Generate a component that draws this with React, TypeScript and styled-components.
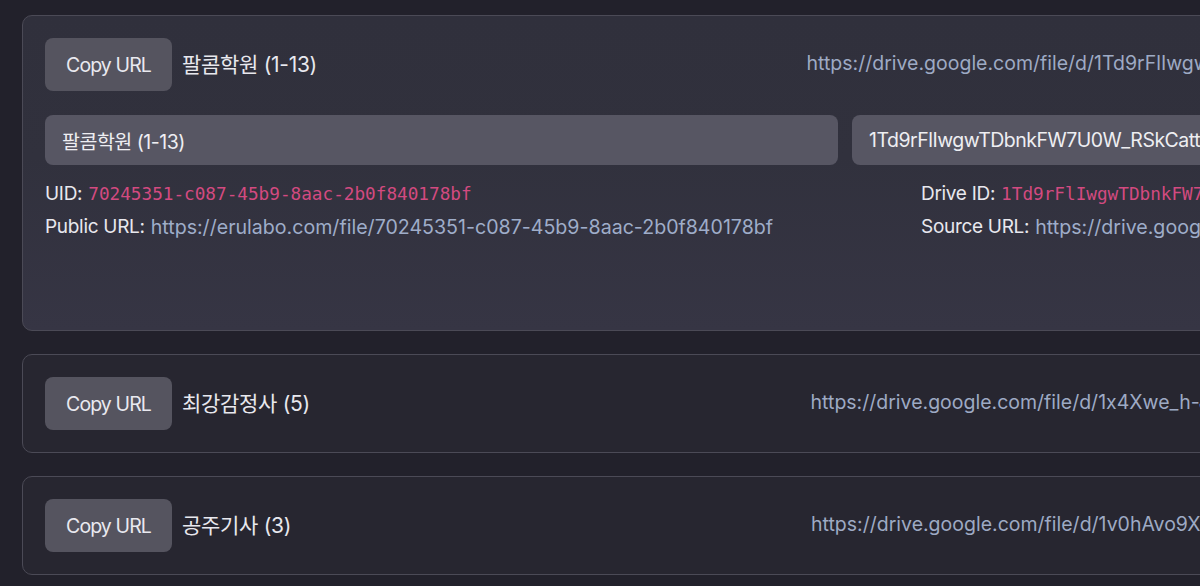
import React from "react";
import styled, { createGlobalStyle } from "styled-components";

const Global = createGlobalStyle`
  html, body { margin: 0; padding: 0; background: #22212b; overflow: hidden; }
  body {
    font-family: "Inter", "Noto Sans CJK KR", sans-serif;
    color: #e8e8ee;
    font-feature-settings: "calt" 0;
  }
  button { font-feature-settings: "calt" 0; }
`;

const Page = styled.div`
  width: 1646px;
  padding: 15px 0 0 22px;
  display: flex;
  flex-direction: column;
  gap: 23px;
`;

const Card = styled.div<{ $open?: boolean }>`
  border: 1px solid #4b4a56;
  border-radius: 10px;
  padding: 22px 22px ${(p) => (p.$open ? "87px" : "22px")};
  background: ${(p) =>
    p.$open
      ? "linear-gradient(180deg, #30303c 0%, #31313d 45%, #363544 100%)"
      : "#272630"};
  display: flex;
  flex-direction: column;
`;

const Header = styled.div`
  display: flex;
  align-items: center;
  height: 53px;
`;

const CopyButton = styled.button`
  height: 53px;
  width: 127px;
  border: none;
  border-radius: 8px;
  background: #55545f;
  color: #e9e9ef;
  font-family: "Inter", sans-serif;
  font-size: 19.5px;
  letter-spacing: -0.9px;
  padding: 0;
  flex-shrink: 0;
`;

const Title = styled.span`
  margin-left: 10px;
  margin-top: -4px;
  font-size: 21px;
  letter-spacing: -0.3px;
  color: #e8e8ee;
`;

const HeaderUrl = styled.span`
  margin-left: auto;
  margin-right: -7px;
  margin-top: -3px;
  font-size: 19.5px;
  color: #9eaac4;
  white-space: nowrap;
`;

const Inputs = styled.div`
  margin-top: 24px;
  display: grid;
  grid-template-columns: 1fr 1fr;
  gap: 14px;
`;

const Field = styled.div`
  height: 50px;
  border-radius: 8px;
  background: #575663;
  display: flex;
  align-items: center;
  padding: 0 17px;
  font-size: 19.5px;
  letter-spacing: -0.5px;
  color: #eeeef2;
  white-space: nowrap;
  overflow: hidden;
`;

const Info = styled.div`
  margin-top: 12px;
  display: grid;
  grid-template-columns: 876px 1fr;
`;

const InfoCol = styled.div`
  display: flex;
  flex-direction: column;
`;

const Line = styled.div`
  height: 33px;
  display: flex;
  align-items: center;
  font-size: 19px;
  letter-spacing: -0.3px;
  white-space: nowrap;
  color: #e8e8ee;
`;

const Mono = styled.span`
  margin-left: 6px;
  font-family: "DejaVu Sans Mono", monospace;
  font-size: 17.7px;
  letter-spacing: 0;
  color: #d34a80;
`;

const Link = styled.span`
  margin-left: 6px;
  font-size: 19.6px;
  letter-spacing: 0;
  color: #9fadc9;
`;

const items = [
  {
    title: "팔콤학원 (1-13)",
    id: "1Td9rFlIwgwTDbnkFW7U0W_RSkCattxQe",
    uid: "70245351-c087-45b9-8aac-2b0f840178bf",
    open: true,
  },
  { title: "최강감정사 (5)", id: "1x4Xwe_h-JqP8sVbn2LkT0ZrnnYc5uDgA", open: false },
  { title: "공주기사 (3)", id: "1v0hAvo9XWt3lpLmQ7sRz_2nBcYdE8fGh", open: false },
];

export default function App() {
  return (
    <>
      <Global />
      <Page>
        {items.map((it) => {
          const src = `https://drive.google.com/file/d/${it.id}/view?usp=sharing`;
          return (
            <Card key={it.id} $open={it.open}>
              <Header>
                <CopyButton>Copy URL</CopyButton>
                <Title>{it.title}</Title>
                <HeaderUrl>{src}</HeaderUrl>
              </Header>
              {it.open && (
                <>
                  <Inputs>
                    <Field>{it.title}</Field>
                    <Field>{it.id}</Field>
                  </Inputs>
                  <Info>
                    <InfoCol>
                      <Line>
                        UID:<Mono>{it.uid}</Mono>
                      </Line>
                      <Line>
                        Public URL:<Link>https://erulabo.com/file/{it.uid}</Link>
                      </Line>
                    </InfoCol>
                    <InfoCol>
                      <Line>
                        Drive ID:<Mono>{it.id}</Mono>
                      </Line>
                      <Line>
                        Source URL:<Link>{src}</Link>
                      </Line>
                    </InfoCol>
                  </Info>
                </>
              )}
            </Card>
          );
        })}
      </Page>
    </>
  );
}
